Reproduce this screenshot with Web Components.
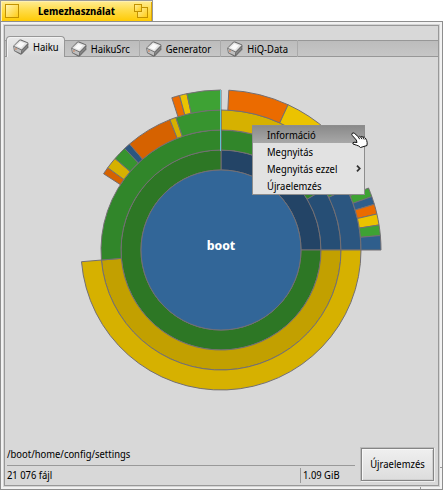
<!DOCTYPE html>
<html lang="hu">
<head>
<meta charset="utf-8">
<title>Lemezhasználat</title>
<style>
html, body { margin: 0; height: 100%; background: #fff; }
body { font: 10px/17px "Noto Sans Display", "Open Sans", "Noto Sans", sans-serif; color: #000; }
</style>
</head>
<body>
<deskbar-window caption="Lemezhasználat">
  <volume-tabs>
    <volume-tab selected>Haiku</volume-tab>
    <volume-tab>HaikuSrc</volume-tab>
    <volume-tab>Generator</volume-tab>
    <volume-tab>HiQ-Data</volume-tab>
  </volume-tabs>
  <usage-chart label="boot">
    <context-menu>
      <menu-item active>Információ</menu-item>
      <menu-item>Megnyitás</menu-item>
      <menu-item submenu>Megnyitás ezzel</menu-item>
      <menu-item>Újraelemzés</menu-item>
    </context-menu>
    <hand-cursor></hand-cursor>
  </usage-chart>
  <status-bar>
    <span slot="path">/boot/home/config/settings</span>
    <span slot="count">21 076 fájl</span>
    <span slot="size">1.09 GiB</span>
    <push-button slot="action">Újraelemzés</push-button>
  </status-bar>
</deskbar-window>
<script>
const define = (name, html, setup) => customElements.define(name, class extends HTMLElement {
  constructor() {
    super();
    this.attachShadow({ mode: 'open' }).innerHTML = html;
  }
  connectedCallback() { if (setup) setup(this, this.shadowRoot); }
});

define('deskbar-window', `
<style>
:host { display: flex; flex-direction: column; min-height: 100vh; }
header { display: flex; align-items: center; justify-content: space-between; align-self: flex-start; box-sizing: border-box;
  width: 153px; height: 21px; padding: 0 4px; border: 1px solid #999; border-width: 1px 1px 0 1px;
  background: linear-gradient(#ffec94, #ffdc4a 45%, #ffcb05); box-shadow: inset 1px 1px #fff0b0, inset -1px 0 #e0a800; }
h1 { margin: 0; font: 700 10px/18px "Noto Sans Display", "Open Sans", sans-serif; color: #000; }
button { display: flex; padding: 0; border: 0; background: none; }
main { flex: 1; display: flex; flex-direction: column; border: 1px solid #8e8e8e; padding: 3px;
  background: linear-gradient(#989898, #989898) right 0 bottom 21px / 3px 1px no-repeat,
    linear-gradient(#989898, #989898) right 21px bottom 0 / 1px 3px no-repeat,
    linear-gradient(#f2f2f2, #f2f2f2); }
section { flex: 1; display: flex; flex-direction: column; border: 1px solid #989898; background: #d8d8d8; box-shadow: 0 0 0 1px #d4d4d4; }
</style>
<header>
  <button aria-label="Bezárás"><svg width="14" height="14"><defs><linearGradient id="g" x2="1" y2="1"><stop stop-color="#fff6ba"/><stop offset="1" stop-color="#ffcb10"/></linearGradient></defs><rect x=".5" y=".5" width="13" height="13" fill="url(#g)" stroke="#c39200"/></svg></button>
  <h1></h1>
  <button aria-label="Nagyítás"><svg width="14" height="14"><defs><linearGradient id="h" x2="1" y2="1"><stop stop-color="#fff0a0"/><stop offset="1" stop-color="#ffcb10"/></linearGradient></defs><rect x="3.500" y="3.500" width="10" height="10" fill="url(#h)" stroke="#c39200"/><rect x=".5" y=".5" width="7" height="7" fill="url(#h)" stroke="#c39200"/></svg></button>
</header>
<main><section><slot></slot></section></main>`,
(el, root) => { root.querySelector('h1').textContent = el.getAttribute('caption'); });

define('volume-tabs', `
<style>
:host { display: flex; align-items: flex-end; height: 31px; padding-left: 1px;
  background: linear-gradient(#979797, #979797) 0 14px / 100% 1px no-repeat,
    linear-gradient(#979797, #979797) 0 30px / 100% 1px no-repeat,
    linear-gradient(#bcbcbc, #c6c6c6) 0 15px / 100% 15px no-repeat; }
</style><slot></slot>`);

define('volume-tab', `
<style>
:host { display: block; }
button { display: flex; align-items: center; gap: 4px; box-sizing: border-box; height: 17px; padding: 0 9px 0 6px;
  border: 0; border-right: 1px solid #aaa; background: none; font: inherit; line-height: 16px; color: inherit; }
:host([selected]) button { height: 21px; padding: 0 5px 0 6px; border: 1px solid #979797; border-bottom: 0; border-radius: 4px 4px 0 0;
  background: linear-gradient(#e9e9e9, #d8d8d8); box-shadow: inset 1px 1px #f2f2f2; }
</style>
<button role="tab"><svg width="16" height="16" viewBox="0 0 16 16">
  <path d="M3 13 L8 16 L16 8.500 L15.500 7Z" fill="#777" opacity=".5"/>
  <path d="M.2 7 L6.300 .8 Q7 .2 8 .5 L14.600 3.300 Q15.600 3.800 15.500 5 L15 8.500 L9 14.900 Q8 15.700 7 15.200 L1 12Z" fill="#686868"/>
  <path d="M1 7 L7 1.200 L14.700 4.300 L8.700 10.500Z" fill="#e2e2e2"/>
  <path d="M3.300 6.700 L7.400 2.700 L11.800 4.600 L8 8.700Z" fill="#fafafa"/>
  <path d="M1 7.800 L8.300 11.300 L7.900 14.600 L1.600 11.500Z" fill="#c0c0c0"/>
  <path d="M9.100 11.300 L14.800 5.400 L14.300 8.300 L8.700 14.200Z" fill="#858585"/>
  <path d="M2.200 9.500 h1.500 v1 h-1.500z" fill="#d46a35"/>
</svg><slot></slot></button>`,
(el, root) => { root.querySelector('button').setAttribute('aria-selected', el.hasAttribute('selected')); });

define('usage-chart', `
<style>
:host { flex: 1; display: flex; align-items: center; justify-content: center; padding: 0 1px 4px 0; }
div { position: relative; width: 322px; height: 322px; }
svg { display: block; }
path, circle { stroke: #736f73; stroke-width: 1; }
text { font: 700 13px "Noto Sans Display", "Open Sans", sans-serif; fill: #fff; text-anchor: middle; }
</style>
<div><svg width="322" height="322" viewBox="-161 -161 322 322"><g></g><circle r="80" fill="#326698"/><text></text><path d="M-.5 -160V-99" style="stroke:#62c3d0"/></svg><slot></slot></div>`,
(el, root) => {
  const palette = {
    blue: ['#234466', '#264e75', '#2b5680', '#2f5e8c'],
    green: ['#2d7725', '#31862a', '#37942f', '#3ea234'],
    yellow: ['#ae8f00', '#c2a000', '#d6b100', '#ebc300'],
    orange: ['#ae4f00', '#c25800', '#d66200', '#eb6b00']
  };
  const rings = [
    [[0, 90, 'blue'], [90, 360, 'green']],
    [[0, 59.5, 'green'], [59.5, 90, 'blue'], [90, 265.2, 'yellow'], [265.2, 360, 'green']],
    [[0, 40, 'yellow'], [40, 64, 'green'], [64, 90, 'blue'], [90, 265.2, 'yellow'], [303, 306, 'orange'],
      [306, 310.8, 'yellow'], [310.8, 316.5, 'green'], [316.5, 319.2, 'blue'], [319.2, 338.6, 'orange'],
      [338.6, 341.2, 'yellow'], [341.2, 360, 'green']],
    [[2.8, 24.8, 'orange'], [24.8, 42, 'yellow'], [67.2, 70.5, 'green'], [70.5, 73.4, 'blue'], [73.4, 77, 'orange'],
      [77, 81, 'yellow'], [81, 84.8, 'green'], [84.8, 90, 'blue'], [342.1, 345, 'orange'], [345, 347.7, 'yellow'],
      [347.7, 360, 'green']]
  ];
  const at = (r, a) => {
    const t = a * Math.PI / 180;
    return (r * Math.sin(t)).toFixed(2) + ' ' + (-r * Math.cos(t)).toFixed(2);
  };
  const wedge = (r, from, to, fill) => {
    const big = to - from > 180 ? 1 : 0, out = r + 20;
    return `<path fill="${fill}" d="M${at(r, from)}L${at(out, from)}A${out} ${out} 0 ${big} 1 ${at(out, to)}L${at(r, to)}A${r} ${r} 0 ${big} 0 ${at(r, from)}Z"/>`;
  };
  root.querySelector('g').innerHTML = rings.map((ring, i) =>
    ring.map(([from, to, hue]) => wedge(80 + 20 * i, from, to, palette[hue][i])).join('')).join('');
  root.querySelector('text').textContent = el.getAttribute('label');
});

define('context-menu', `
<style>
:host { position: absolute; left: 192px; top: 36px; box-sizing: border-box; width: 113px; border: 1px solid #8d8d8d;
  background: #e2e2e2; box-shadow: inset 0 1px #eee; }
</style><slot></slot>`, el => el.setAttribute('role', 'menu'));

define('menu-item', `
<style>
:host { display: block; }
button { display: flex; align-items: center; justify-content: space-between; width: 100%; height: 17px; padding: 1px 3px 0 14px; border: 0; background: none;
  font: inherit; line-height: 16px; color: inherit; white-space: nowrap; }
:host([active]) button { background: linear-gradient(#8a8a8a, #a8a8a8); }
svg { display: none; }
:host([submenu]) svg { display: block; }
</style><button role="menuitem"><slot></slot><svg width="5" height="7"><path d="M1 .7 L3.700 3.500 L1 6.300" fill="none" stroke="#333" stroke-width="1.800"/></svg></button>`);

define('hand-cursor', `
<style>
:host { position: absolute; left: 291px; top: 43px; }
svg { display: block; }
</style><svg width="18" height="17" viewBox="0 0 18 17"><path d="M1 1.500 Q2 .3 3.700 1.500 L7.500 5 Q8.300 3.700 9.700 4.900 Q10.800 3.800 12 5.200 Q13.500 4.500 14.300 6 L15.700 8.500 Q16.500 10.500 16 13.500 L9.500 15.500 Q8 13.700 5.500 13.200 L2 12 Q1.300 10.400 3 10.200 L6 10.500 L5.300 8 L1.300 3.500 Q.5 2.500 1 1.500Z" fill="#fff" stroke="#111"/><path d="M7.500 5 L8.600 7.200 M9.700 5 L11 7.200 M12.100 5.200 L13.200 7.500" fill="none" stroke="#111"/></svg>`);

define('push-button', `
<style>
:host { display: block; }
button { box-sizing: border-box; height: 35px; width: 75px; padding: 0; border: 1px solid; border-color: #bbb #eee #eee #bbb; outline: 1px solid #858585; outline-offset: -2px;
  background: linear-gradient(#f0f0f0, #dcdcdc); font: inherit; color: inherit; box-shadow: inset 2px 2px #f8f8f8, inset -2px -2px #cfcfcf; }
</style><button><slot></slot></button>`);

define('status-bar', `
<style>
:host { display: flex; align-items: flex-end; gap: 5px; padding: 0 3px 1px 2px; }
.info { flex: 1; }
.path { height: 19px; border-bottom: 1px solid #999; line-height: 17px; }
.row { display: flex; height: 18px; align-items: center; }
.count { flex: 1; }
.size { box-sizing: border-box; width: 55px; height: 15px; padding-left: 2px; border-left: 1px solid #999; line-height: 15px; }
.action { padding-bottom: 2px; }
</style>
<div class="info"><div class="path"><slot name="path"></slot></div>
<div class="row"><div class="count"><slot name="count"></slot></div><div class="size"><slot name="size"></slot></div></div></div>
<div class="action"><slot name="action"></slot></div>`);
</script>
</body>
</html>
